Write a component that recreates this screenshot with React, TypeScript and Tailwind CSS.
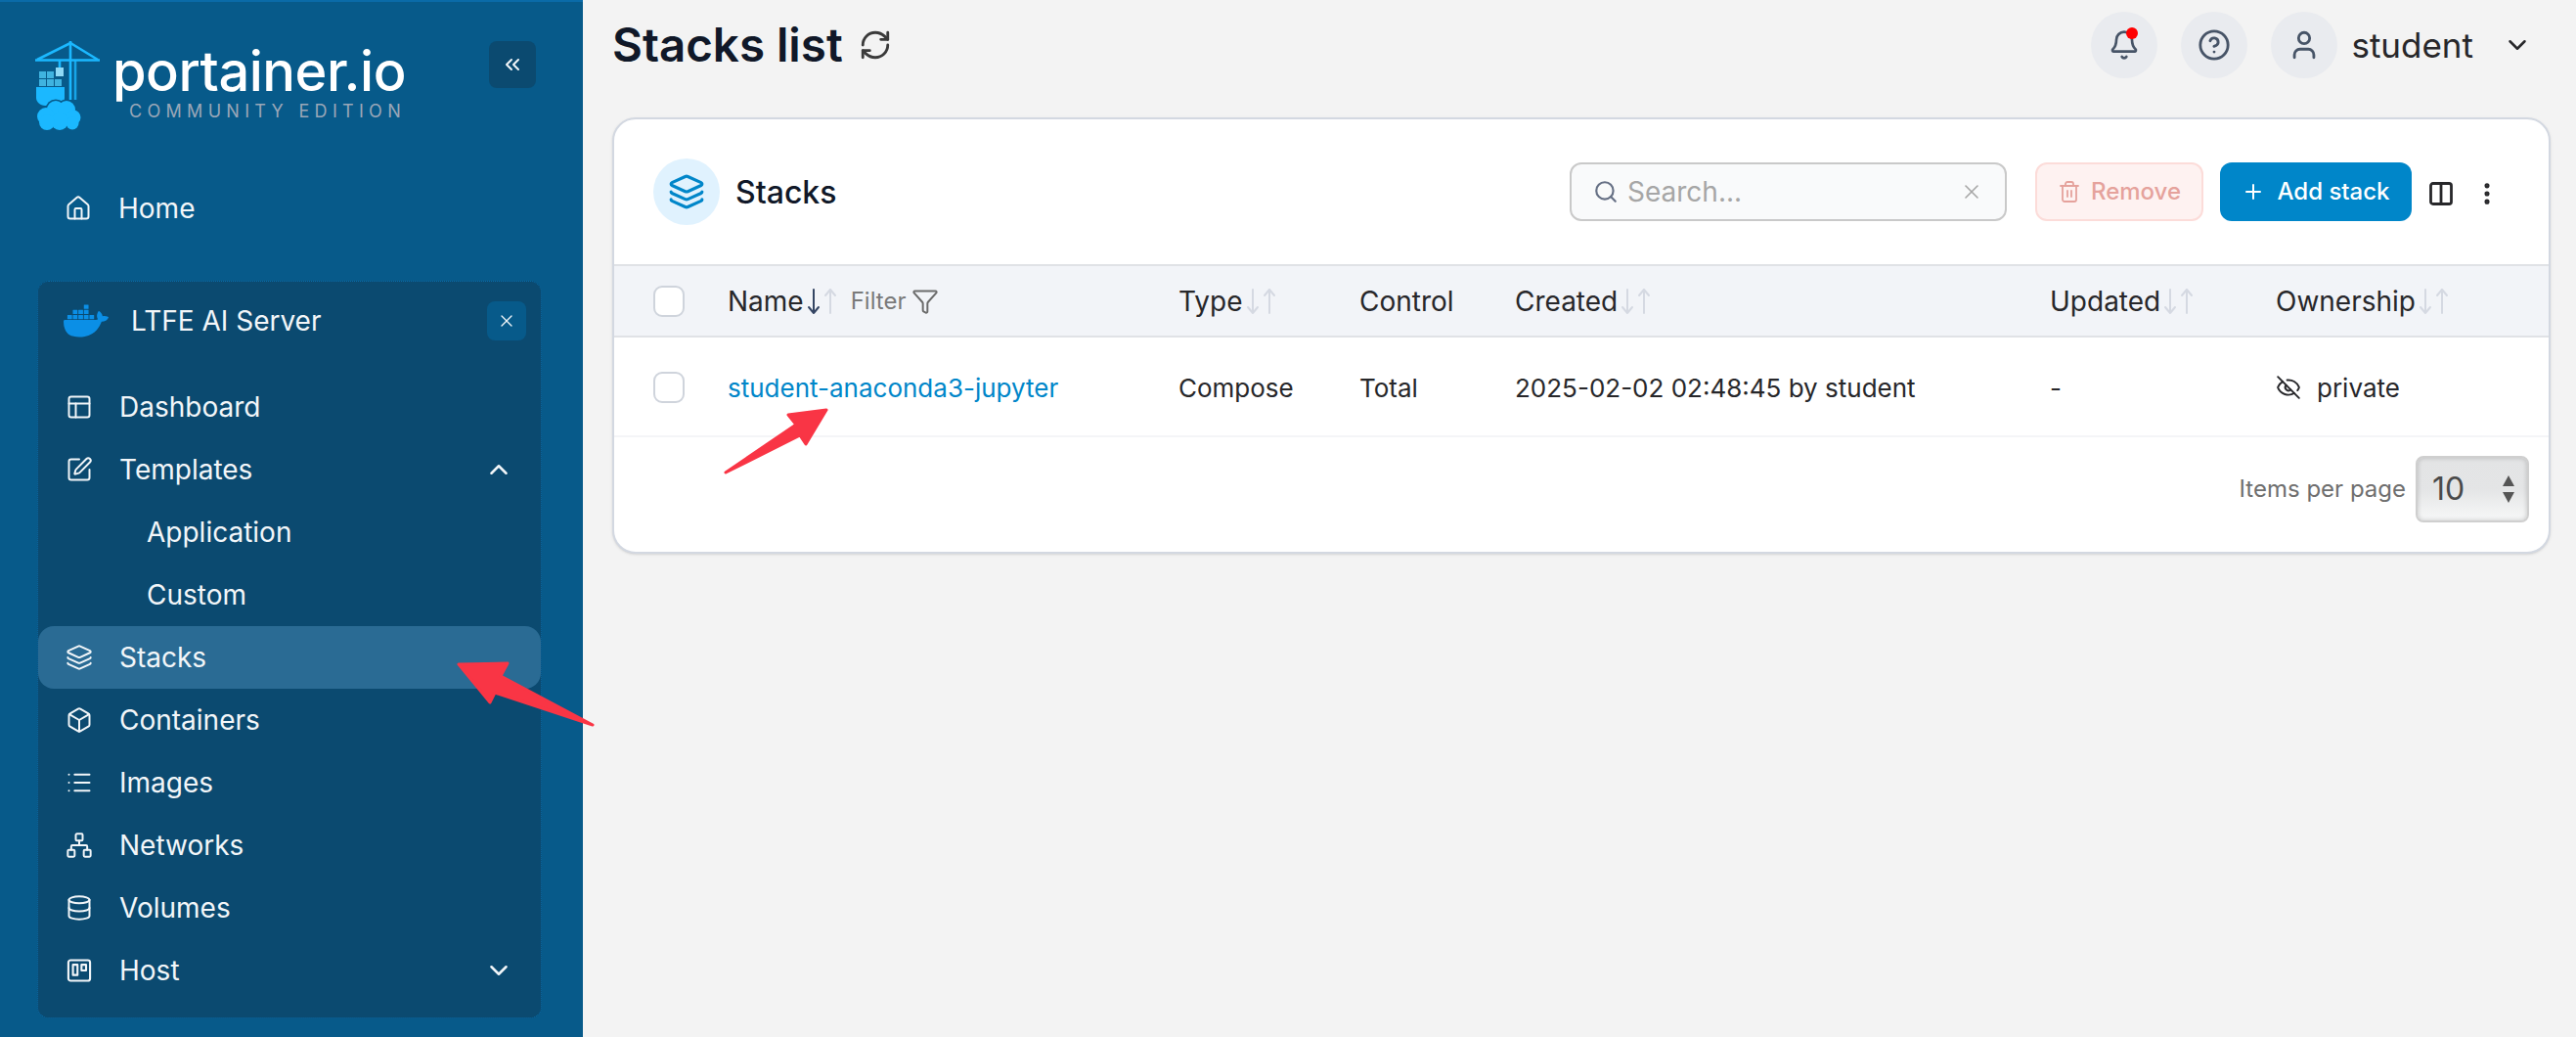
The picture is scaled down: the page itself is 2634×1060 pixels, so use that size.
import React from "react";
import {
  Home,
  PanelsTopLeft,
  SquarePen,
  Layers,
  Box,
  List,
  Network,
  Database,
  ChevronUp,
  ChevronDown,
  ChevronsLeft,
  X,
  Bell,
  CircleHelp,
  User,
  RefreshCw,
  Search,
  Trash2,
  Plus,
  Columns2,
  EllipsisVertical,
  Funnel,
  EyeOff,
} from "lucide-react";
import { SiDocker } from "react-icons/si";

const HostIcon = ({ size = 28 }: { size?: number }) => (
  <svg width={size} height={size} viewBox="0 0 24 24" fill="none" stroke="currentColor" strokeWidth="1.8" strokeLinecap="round" strokeLinejoin="round">
    <rect x="2.5" y="3" width="19" height="18" rx="2" />
    <rect x="6.5" y="7" width="4" height="9" />
    <rect x="14" y="7" width="4" height="5" />
  </svg>
);

const Logo = () => (
  <svg width="68" height="92" viewBox="0 0 68 92" fill="none" className="shrink-0">
    <g stroke="#1bb8ff" strokeWidth="2.6">
      <path d="M0 19.5H66" />
      <path d="M36 0V60" />
      <path d="M41 19V60" opacity="0.8" />
      <path d="M2 19L36 2L64 19" />
      <path d="M25 19V27" />
    </g>
    <rect x="21" y="27" width="8" height="9" fill="#8fd9f5" />
    <g fill="#3fb3e0">
      <rect x="4" y="31" width="7" height="7" />
      <rect x="12" y="31" width="7" height="7" />
      <rect x="4" y="39" width="7" height="7" />
      <rect x="12" y="39" width="7" height="7" />
      <rect x="20" y="39" width="7" height="7" />
    </g>
    <path d="M1 47H30V58C30 63 25 66 19 66H10C5 66 1 62 1 58Z" fill="#1bb8ff" />
    <g fill="#075a8a">
      <circle cx="21" cy="70" r="10.5" />
      <circle cx="32" cy="70" r="10.5" />
      <circle cx="11" cy="77" r="10.5" />
    </g>
    <g fill="#1bb8ff">
      <circle cx="21" cy="70" r="9" />
      <circle cx="32" cy="70" r="9" />
      <circle cx="11" cy="77" r="9" />
      <circle cx="39" cy="78" r="7.5" />
      <circle cx="38" cy="84" r="6.5" />
      <circle cx="25" cy="82" r="9" />
      <circle cx="12" cy="83" r="8" />
    </g>
  </svg>
);

const NavRow = ({
  icon,
  label,
  right,
  active,
  sub,
}: {
  icon?: React.ReactNode;
  label: string;
  right?: React.ReactNode;
  active?: boolean;
  sub?: boolean;
}) => (
  <div className={`flex h-16 items-center rounded-2xl pr-[28px] ${active ? "bg-[#2a6b94]" : ""}`}>
    <div className="flex w-[83px] shrink-0 justify-center">{icon}</div>
    <span className={sub ? "pl-[28px]" : ""}>{label}</span>
    {right && <span className="ml-auto">{right}</span>}
  </div>
);

// thin, narrow sort arrows as in the table header
const SortArrow = ({ up, active }: { up?: boolean; active?: boolean }) => (
  <svg
    width="14"
    height="30"
    viewBox="0 0 14 30"
    fill="none"
    stroke="currentColor"
    strokeWidth={2}
    strokeLinecap="round"
    strokeLinejoin="round"
    className={active ? "text-[#344563]" : "text-[#d5d9e2]"}
  >
    {up ? <path d="M7 27V3M2 9L7 3L12 9" /> : <path d="M7 3V27M2 21L7 27L12 21" />}
  </svg>
);

const SortArrows = ({ active }: { active?: boolean }) => (
  <span className="ml-[3px] flex items-center gap-[3px]">
    <SortArrow active={active} />
    <SortArrow up />
  </span>
);

const IconCircle = ({ children }: { children: React.ReactNode }) => (
  <div className="relative flex h-[68px] w-[68px] items-center justify-center rounded-full bg-[#e9ebef] text-[#475467]">
    {children}
  </div>
);

const rowGrid = "grid grid-cols-[76px_461px_185px_159px_547px_231px_1fr] items-center pl-[40px]";

const Checkbox = () => (
  <div className="h-[32px] w-[32px] rounded-[9px] border-2 border-[#cfd4dc] bg-white" />
);

export default function App() {
  return (
    <div className="relative flex h-screen w-full overflow-hidden bg-[#f3f3f3] font-['Inter',sans-serif] text-[#1f2328]">
      <aside className="flex w-[596px] shrink-0 flex-col border-t-2 border-[#0a6ba8] bg-[#075a8a] text-[28px] text-[#f2f6f9]">
        <div className="mt-[40px] flex h-[92px] pl-[36px] pr-[48px]">
          <Logo />
          <div className="ml-[11px] flex flex-col">
            <span className="mt-[2px] text-[56px] leading-[58px] font-medium tracking-[-0.5px] text-white">portainer.io</span>
            <span className="mt-[2px] pl-[17px] text-[18px] leading-[20px] tracking-[5.3px] text-[#9aa7b8]">COMMUNITY EDITION</span>
          </div>
          <div className="ml-auto flex h-[48px] w-[48px] items-center justify-center rounded-lg bg-[#0b4a70]">
            <ChevronsLeft size={24} />
          </div>
        </div>

        <div className="ml-[38px] mr-[42px] mt-[47px]">
          <div className="flex h-16 items-center">
            <div className="flex w-[83px] shrink-0 justify-center">
              <Home size={28} strokeWidth={1.7} />
            </div>
            Home
          </div>
        </div>

        <div className="ml-[38px] mr-[42px] mt-[42px] flex flex-col rounded-xl border border-dotted border-[#0a6ba8] bg-[#0b4a70] pb-[16px]">
          <div className="mb-[24px] mt-[8px] flex h-16 items-center pl-[26px] pr-[15px]">
            <SiDocker size={46} className="text-[#0b8fe6]" />
            <span className="ml-[23px]">LTFE AI Server</span>
            <div className="ml-auto flex h-[40px] w-[40px] items-center justify-center rounded-lg bg-[#075a8a]">
              <X size={20} strokeWidth={1.6} />
            </div>
          </div>
          <NavRow icon={<PanelsTopLeft size={28} strokeWidth={1.7} />} label="Dashboard" />
          <NavRow icon={<SquarePen size={28} strokeWidth={1.7} />} label="Templates" right={<ChevronUp size={30} strokeWidth={2} />} />
          <NavRow sub label="Application" />
          <NavRow sub label="Custom" />
          <NavRow active icon={<Layers size={28} strokeWidth={1.7} />} label="Stacks" />
          <NavRow icon={<Box size={28} strokeWidth={1.7} />} label="Containers" />
          <NavRow icon={<List size={28} strokeWidth={1.7} />} label="Images" />
          <NavRow icon={<Network size={28} strokeWidth={1.7} />} label="Networks" />
          <NavRow icon={<Database size={28} strokeWidth={1.7} />} label="Volumes" />
          <NavRow icon={<HostIcon />} label="Host" right={<ChevronDown size={30} strokeWidth={2} />} />
        </div>
      </aside>

      <main className="flex min-w-0 flex-1 flex-col pl-[30px] pr-[26px]">
        <div className="flex h-[92px] items-center">
          <h1 className="text-[47.5px] font-semibold text-[#101828]">Stacks list</h1>
          <RefreshCw size={34} strokeWidth={2} className="ml-[16px] text-[#3a3a3a]" />
          <div className="ml-auto flex items-center gap-[24px]">
            <IconCircle>
              <Bell size={32} strokeWidth={2} />
              <span className="absolute left-[36px] top-[16px] h-[12px] w-[12px] rounded-full bg-[#ff0000]" />
            </IconCircle>
            <IconCircle>
              <CircleHelp size={34} strokeWidth={2} />
            </IconCircle>
            <div className="flex items-center">
              <IconCircle>
                <User size={34} strokeWidth={2} />
              </IconCircle>
              <span className="ml-[14px] text-[35px] text-[#27272a]">student</span>
              <ChevronDown size={30} strokeWidth={2} className="ml-[30px] mr-[19px] text-[#27272a]" />
            </div>
          </div>
        </div>

        <section className="mt-[28px] flex h-[446px] flex-col rounded-3xl border-2 border-[#d3d8e1] bg-white shadow-sm">
          <div className="flex h-[148px] items-center pl-[40px] pr-[49px]">
            <div className="flex h-[68px] w-[68px] items-center justify-center rounded-full bg-[#e0f2fe] text-[#0086c9]">
              <Layers size={38} strokeWidth={2} />
            </div>
            <span className="ml-[16px] pt-[2px] text-[32px] font-medium text-[#101828]">Stacks</span>

            <div className="ml-auto flex h-[60px] w-[447px] items-center rounded-xl border-2 border-[#c9c9c9] bg-[#f9fafb] pl-[22px] pr-[22px]">
              <Search size={26} strokeWidth={2} className="text-[#667085]" />
              <span className="ml-[9px] text-[28px] text-[#a6a6a6]">Search...</span>
              <X size={24} strokeWidth={1.6} className="ml-auto text-[#a6a6a6]" />
            </div>
            <button className="ml-[29px] flex h-[60px] w-[172px] items-center justify-center gap-[10px] rounded-xl border-2 border-[#fcdcd9] bg-[#fef2f1] text-[24px] font-medium text-[#e5a29c]">
              <Trash2 size={24} strokeWidth={1.8} />
              Remove
            </button>
            <button className="ml-[17px] flex h-[60px] w-[196px] items-center justify-center gap-[12px] rounded-xl bg-[#0086c9] text-[24px] font-medium text-white">
              <Plus size={24} strokeWidth={2} />
              Add stack
            </button>
            <Columns2 size={28} strokeWidth={2.4} className="ml-[16px] mt-[4px] text-[#27272a]" />
            <EllipsisVertical size={28} strokeWidth={2.4} className="ml-[19px] mt-[4px] text-[#27272a]" />
          </div>

          <div className={`${rowGrid} h-[75px] border-y-2 border-[#e0e2e6] bg-[#f2f4f8] text-[28px] text-[#27272a]`}>
            <Checkbox />
            <div className="flex items-center">
              Name
              <SortArrows active />
              <span className="ml-[14px] text-[24px] text-[#7a7a7a]">Filter</span>
              <Funnel size={28} strokeWidth={1.7} className="ml-[6px] text-[#6b6b6b]" />
            </div>
            <div className="flex items-center">
              Type
              <SortArrows />
            </div>
            <div>Control</div>
            <div className="flex items-center">
              Created
              <SortArrows />
            </div>
            <div className="flex items-center">
              Updated
              <SortArrows />
            </div>
            <div className="flex items-center">
              Ownership
              <SortArrows />
            </div>
          </div>

          <div className={`${rowGrid} h-[102px] border-b-2 border-[#f4f5f7] pt-[2px] text-[26px] text-[#27272a]`}>
            <Checkbox />
            <a className="text-[#0086c9]">student-anaconda3-jupyter</a>
            <div>Compose</div>
            <div>Total</div>
            <div>2025-02-02 02:48:45 by student</div>
            <div>-</div>
            <div className="flex items-center">
              <EyeOff size={26} strokeWidth={1.8} className="mr-[16px]" />
              private
            </div>
          </div>

          <div className="flex items-center justify-end pr-[20px] pt-[19px]">
            <span className="mr-[10px] text-[24px] text-[#6f6f6f]">Items per page</span>
            <div className="flex h-[68px] w-[116px] items-center justify-between rounded-lg border-2 border-[#cfcfcf] bg-gradient-to-b from-[#e3e4e5] via-[#e4e5e6] to-[#f7f8f8] pl-[15px] pr-[12px] shadow-[inset_0_0_5px_rgba(0,0,0,0.2)]">
              <span className="text-[32px] text-[#4a4a4a]">10</span>
              <svg width="14" height="30" viewBox="0 0 14 30" fill="#555">
                <path d="M7 1L13 12H1Z" />
                <path d="M7 29L1 18H13Z" />
              </svg>
            </div>
          </div>
        </section>
      </main>

      {/* annotation arrows drawn on top of the screenshot */}
      <svg className="pointer-events-none absolute left-0 top-0" width="1100" height="800" viewBox="0 0 1100 800">
        <g fill="#f93545" stroke="#f93545" strokeWidth="3" strokeLinejoin="round">
          <path d="M469 679L519 678L512 691L606 741L506 708L501 718Z" />
          <path d="M845 419L806 424L814 434L742 483L818 445L824 454Z" />
        </g>
      </svg>
    </div>
  );
}
